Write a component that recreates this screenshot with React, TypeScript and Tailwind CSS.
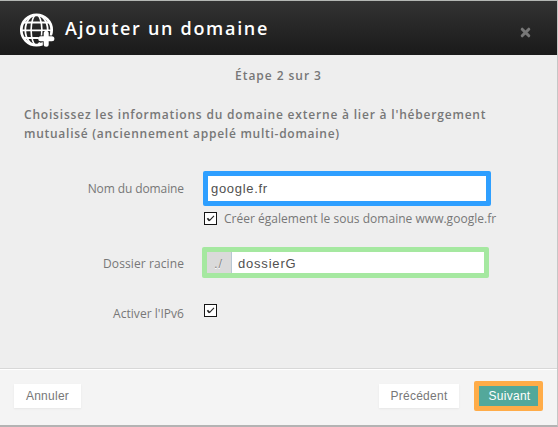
import React from "react";

function GlobePlus() {
  return (
    <svg width="35" height="35" viewBox="0 0 35 35" fill="none" stroke="#fff" className="mt-[5px] shrink-0">
      <circle cx="16.5" cy="17" r="15.2" strokeWidth="2.7" />
      <ellipse cx="16.5" cy="17" rx="11.2" ry="15.2" strokeWidth="1.8" />
      <ellipse cx="16.5" cy="17" rx="5.4" ry="15.2" strokeWidth="1.6" />
      <path d="M3.5 9.5h26M1.5 17.3h30M3.5 25h26" strokeWidth="1.8" />
      <path d="M26.2 18v15M18.8 25.8h15" stroke="#202020" strokeWidth="6.8" />
      <path d="M26.2 20.3v11M20.7 25.8h11.2" strokeWidth="5" strokeLinecap="round" />
    </svg>
  );
}

function Checkbox() {
  return (
    <span role="checkbox" aria-checked="true" className="block h-[13px] w-[13px] shrink-0 border border-[#151515] bg-white">
      <svg width="11" height="11" viewBox="0 0 11 11" fill="none" stroke="#222">
        <path d="M2.4 5.2L4.4 7.6" strokeWidth="1.7" />
        <path d="M4.2 7.8L9 2.8" strokeWidth="1.1" />
      </svg>
    </span>
  );
}

function Label({ children }: { children: React.ReactNode }) {
  return <div className="w-[184px] shrink-0 text-right">{children}</div>;
}

export default function App() {
  return (
    <div className="flex h-[427px] w-[558px] flex-col overflow-hidden border-t border-r border-b-2 border-t-[#b4b7b4] border-r-[#c6c6c6] border-b-[#b3b3b3] bg-[#eee] font-['Open_Sans',sans-serif] text-[12px] whitespace-nowrap text-[#777]">
      <header className="flex h-[54px] shrink-0 items-center bg-gradient-to-b from-[#333] to-[#1a1a1a] pr-[26px] pl-[20px] text-white">
        <GlobePlus />
        <h1 className="ml-[10px] text-[18px] leading-[24px] font-semibold tracking-[1.7px]">Ajouter un domaine</h1>
        <svg width="11" height="11" viewBox="0 0 11 11" className="mt-[8px] ml-auto" fill="none" stroke="#777" strokeWidth="3" strokeLinecap="round">
          <path d="M2.2 2.2l6.6 6.6M8.8 2.2l-6.6 6.6" />
        </svg>
      </header>

      <main className="flex h-[313px] shrink-0 flex-col">
        <p className="mt-[11px] text-center leading-[20px] font-semibold tracking-[0.95px]">Étape 2 sur 3</p>
        <p className="mt-[19px] pl-[24px] leading-[19px] font-semibold">
          <span className="tracking-[0.8px]">Choisissez les informations du domaine externe à lier à l'hébergement</span>
          <br />
          <span className="tracking-[0.73px]">mutualisé (anciennement appelé multi-domaine)</span>
        </p>

        <div className="mt-[28px] flex h-[35px] items-center">
          <Label><span className="tracking-[-0.1px]">Nom du domaine</span></Label>
          <div className="ml-[19px] flex h-[35px] w-[288px] items-center rounded-[2px] border-[5px] border-[#2e9fff] bg-white pl-[3px] font-['Liberation_Sans',sans-serif] text-[13px] tracking-[0.7px] text-[#505050]">
            google.fr
          </div>
        </div>
        <div className="mt-[2px] ml-[204px] flex h-[20px] items-center">
          <Checkbox />
          <span className="ml-[7px] pt-[2px] tracking-[0.02px]">Créer également le sous domaine www.google.fr</span>
        </div>

        <div className="mt-[19px] flex h-[31px] items-center">
          <Label><span className="block pt-[2px] tracking-[0.1px]">Dossier racine</span></Label>
          <div className="ml-[18px] flex h-[31px] w-[287px] rounded-[2px] border-[5px] border-[#a5e8a0] bg-white font-['Liberation_Sans',sans-serif] text-[13px] leading-[23px] text-[#505050]">
            <span className="w-[25px] border-r border-[#b8c8d4] bg-[#dadada] pl-[7px] tracking-[0.8px] text-[#888] [text-shadow:0_1px_0_#fff]">./</span>
            <span className="pl-[6px] tracking-[0.8px]">dossierG</span>
          </div>
        </div>

        <div className="mt-[25px] flex h-[20px] items-start">
          <Label><span className="block pt-[2px] tracking-[0.03px]">Activer l'IPv6</span></Label>
          <div className="ml-[20px] pt-[1px]"><Checkbox /></div>
        </div>
      </main>

      <footer className="flex flex-1 items-start border-t border-[#d8d8d8] bg-[#f4f4f4] pr-[14px] pl-[14px] font-['Liberation_Sans',sans-serif] text-[12px] tracking-[0.25px] shadow-[inset_0_1px_0_#fff]">
        <button className="mt-[15px] h-[24px] w-[67px] bg-white shadow-[0_1px_2px_rgba(0,0,0,0.06)]">Annuler</button>
        <button className="mt-[15px] ml-auto h-[24px] w-[80px] bg-white shadow-[0_1px_2px_rgba(0,0,0,0.06)]">Précédent</button>
        <button className="mt-[12px] ml-[15px] h-[30px] w-[69px] rounded-[2px] border-[5px] border-[#ffac48] bg-[#53a89b] pl-[2px] text-white">Suivant</button>
      </footer>
    </div>
  );
}
